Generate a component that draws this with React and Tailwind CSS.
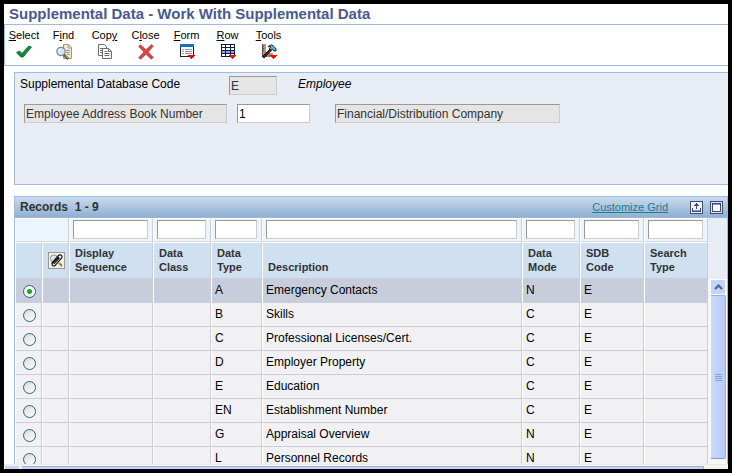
import React from "react";

const CheckIcon = () => (
  <svg width="16" height="16" viewBox="0 0 16 16" aria-hidden="true">
    <path d="M.6 8.500 3.600 7 6 9.500 12.800 2 15.500 3 7.200 13 4.800 13Z" fill="#118a3c" stroke="#0b6428" strokeWidth=".8" />
  </svg>
);

const FindIcon = () => (
  <svg width="16" height="16" viewBox="0 0 16 16" aria-hidden="true">
    <path d="M7.5 .5h5l3 3v11h-8z" fill="#f3ead2" stroke="#9c9484" />
    <path d="M12 .5v3.5h3.5M10 6.5h4M10 8.5h4M11 10.5h3" fill="none" stroke="#a49b88" />
    <circle cx="5" cy="7.5" r="4.2" fill="#cfe4f7" stroke="#7d8a99" strokeWidth="1.2" />
    <path d="M3 7.5a2.2 2.2 0 0 1 2.2-2.3" fill="none" stroke="#fff" strokeWidth="1.2" />
    <path d="m8 11 4.3 4" stroke="#59532e" strokeWidth="2.4" />
    <path d="m9 11.6 3.4 3.2" stroke="#d0b83c" strokeWidth="1" />
  </svg>
);

const CopyIcon = () => (
  <svg width="16" height="16" viewBox="0 0 16 16" aria-hidden="true" fill="#fff" stroke="#6d6d6d">
    <path d="M1.5 .5h6l2 2v9h-8z" />
    <path d="M3 4.5h3M3 6.5h3M3 8.5h3" />
    <path d="M5.5 4.5h6l3 3v7h-9z" />
    <path d="M11.5 4.5v3h3M7.5 7.5h3M7.5 9.5h5M7.5 11.5h5" fill="none" />
  </svg>
);

const CloseIcon = () => (
  <svg width="16" height="16" viewBox="0 0 16 16" aria-hidden="true">
    <path d="M2.500 .8 8 5.800 13.500 .6 15.400 2 10.200 8 15.400 13.500 13.200 15.300 8 10.200 2.800 15.300 .6 13.700 5.800 8 .6 2.500Z" fill="#dc4444" stroke="#b83434" strokeWidth=".6" />
  </svg>
);

const FormIcon = () => (
  <svg width="16" height="16" viewBox="0 0 16 16" aria-hidden="true" shapeRendering="crispEdges">
    <rect x="1.5" y=".5" width="13" height="12" fill="#fff" stroke="#222" />
    <rect x="1" y="0" width="14" height="3" fill="#1673b8" />
    <path d="M3 5.5h2M6 5.5h7M3 7.5h2M6 7.5h7M3 9.5h2M6 9.5h7" stroke="#8b98a8" />
    <path d="M9 11h7l-3.5 4z" fill="#f00" />
  </svg>
);

const RowIcon = () => (
  <svg width="16" height="16" viewBox="0 0 16 16" aria-hidden="true" shapeRendering="crispEdges">
    <rect x="1.5" y=".5" width="13" height="12" fill="#fff" />
    <rect x="1" y="6" width="14" height="3" fill="#8aa5ea" />
    <path d="M1.5 .5h13v12h-13zM5.5 0v13M10.5 0v13M1 3.5h14M1 6.5h14M1 9.5h14" fill="none" stroke="#111b3c" />
    <path d="M9 11h7l-3.5 4z" fill="#f00" />
  </svg>
);

const ToolsIcon = () => (
  <svg width="16" height="16" viewBox="0 0 16 16" aria-hidden="true">
    <path d="M1 0h4v9h7v4H1z" fill="#a99787" />
    <path d="M1.500 0v13M1 2.500h2M1 4.500h2M1 6.500h2M5.500 13v-2M8.500 13v-2" stroke="#665347" />
    <path d="m2 13.500 8-8" stroke="#111" strokeWidth="2.800" />
    <path d="m3 12.500 7-7" stroke="#a12c20" strokeWidth="1" />
    <path d="M7 2.500 10.500 .8 13 2.500 15 5v2h-2L11.500 5 9 6 8 5l2-2z" fill="#62b7e6" stroke="#111" strokeWidth=".9" />
    <path d="M9 11h7l-3.500 4z" fill="#f00" shapeRendering="crispEdges" />
  </svg>
);

const AttachIcon = () => (
  <svg width="15" height="15" viewBox="0 0 15 15" aria-hidden="true">
    <circle cx="5" cy="5.500" r="3.600" fill="#d7e7f3" stroke="#8b949c" />
    <path d="m10 10 3 3" stroke="#8c8448" strokeWidth="2" />
    <path d="M2.500 10.500 9 3q2-2 3.500-.6 1.200 1.400-.5 3.200L6.500 12q-1.800 1.700-3 .6-1-1.100.5-2.800L10 4M5 11l5.500-6" fill="none" stroke="#111" strokeWidth="1.100" />
  </svg>
);

const tools = [
  { before: "", key: "S", after: "elect", Icon: CheckIcon },
  { before: "F", key: "i", after: "nd", Icon: FindIcon },
  { before: "Cop", key: "y", after: "", Icon: CopyIcon },
  { before: "C", key: "l", after: "ose", Icon: CloseIcon },
  { before: "", key: "F", after: "orm", Icon: FormIcon },
  { before: "", key: "R", after: "ow", Icon: RowIcon },
  { before: "", key: "T", after: "ools", Icon: ToolsIcon },
];

const columns = [
  ["Display", "Sequence"],
  ["Data", "Class"],
  ["Data", "Type"],
  ["Description"],
  ["Data", "Mode"],
  ["SDB", "Code"],
  ["Search", "Type"],
];

const records = [
  ["A", "Emergency Contacts", "N"],
  ["B", "Skills", "C"],
  ["C", "Professional Licenses/Cert.", "C"],
  ["D", "Employer Property", "C"],
  ["E", "Education", "C"],
  ["EN", "Establishment Number", "C"],
  ["G", "Appraisal Overview", "N"],
  ["L", "Personnel Records", "N"],
];

const sunken = "h-[19px] border border-t-[#999] border-l-[#999] border-r-[#ccc] border-b-[#ccc] px-px outline-none";
const readOnly = "bg-[#e5e5e5] text-[#333]";
const cell = "border-l border-r border-l-white border-r-[#cccdd6]";

function Toolbar() {
  return (
    <div role="toolbar" aria-label="Actions" className="flex h-[42px] shrink-0 border-y border-l border-[#a3bcdc] pt-[3px]">
      {tools.map(({ before, key, after, Icon }) => (
        <button key={before + key + after} type="button" className="flex w-[41px] flex-col items-center text-[11px] leading-[14px] first:w-[38px]">
          <span>
            {before}
            <u className="underline-offset-1">{key}</u>
            {after}
          </span>
          <span className="mt-[2px]">
            <Icon />
          </span>
        </button>
      ))}
    </div>
  );
}

function HeaderForm() {
  return (
    <section className="mt-[6px] ml-[10px] h-[113px] shrink-0 border-y border-l border-[#9fbddb] bg-[#e8edf5] pt-[3px] text-[12px]">
      <div className="flex pl-[5px]">
        <label htmlFor="sdb-code" className="w-[209px] leading-[16px]">Supplemental Database Code</label>
        <input id="sdb-code" readOnly defaultValue="E" className={`w-[48px] ${sunken} ${readOnly}`} />
        <em className="ml-[21px] leading-[16px]">Employee</em>
      </div>
      <div className="mt-[9px] flex pl-[9px]">
        <input aria-label="Key name" readOnly defaultValue="Employee Address Book Number" className={`w-[203px] ${sunken} ${readOnly}`} />
        <input aria-label="Employee Address Book Number" defaultValue="1" className={`ml-[10px] w-[73px] bg-white ${sunken}`} />
        <input aria-label="Company" readOnly defaultValue="Financial/Distribution Company" className={`ml-[25px] w-[225px] ${sunken} ${readOnly}`} />
      </div>
    </section>
  );
}

function Grid() {
  return (
    <section className="mt-[11px] ml-[10px] flex min-h-0 flex-1 flex-col border-x border-t border-[#9fbddb]">
      <header className="flex h-[21px] shrink-0 items-center border-b border-[#9fb8d4] bg-linear-to-b from-[#c9dbec] to-[#8fb0d2] pr-1 pl-[5px]">
        <h2 className="flex-1 text-[12px] font-bold text-[#333]">Records&nbsp; 1 - 9</h2>
        <a href="#customize" className="mr-[22px] text-[11px] text-[#1f7a94] underline">Customize Grid</a>
        <button type="button" aria-label="Export" className="mr-[7px]">
          <svg className="block" width="13" height="13" viewBox="0 0 13 13" shapeRendering="crispEdges" aria-hidden="true">
            <rect x=".5" y=".5" width="12" height="12" rx="1" fill="#eef2fb" stroke="#45496f" />
            <path d="M6.500 2v6M4 4.500h5M5 3.500h3M2.500 7v3.500h8V7" fill="none" stroke="#45496f" />
            <path d="M3 9.500h7" stroke="#8a8df0" />
          </svg>
        </button>
        <button type="button" aria-label="Maximize">
          <svg className="block" width="13" height="13" viewBox="0 0 13 13" shapeRendering="crispEdges" aria-hidden="true">
            <rect x=".5" y=".5" width="12" height="12" rx="1" fill="#dde3f3" stroke="#45496f" />
            <rect x="2.500" y="2.500" width="8" height="8" fill="#f4f7fd" stroke="#45496f" />
            <path d="M3 3.500h7" stroke="#8a8df0" />
          </svg>
        </button>
      </header>
      <div className="flex min-h-0 flex-1 bg-[#e8ecf4]">
        <div className="min-w-0 flex-1 overflow-hidden">
          <table className="w-full table-fixed border-separate border-spacing-0 bg-[#f1f1f4]">
            <colgroup>
              <col className="w-[27px]" />
              <col className="w-[27px]" />
              <col className="w-[84px]" />
              <col className="w-[58px]" />
              <col className="w-[51px]" />
              <col />
              <col className="w-[58px]" />
              <col className="w-[64px]" />
              <col className="w-[64px]" />
            </colgroup>
            <thead>
              <tr className="h-[24px] bg-[#ecf4fe]">
                <td colSpan={2} className={`border-y border-t-white border-b-[#d5d8e0] ${cell}`} />
                {columns.map((c) => (
                  <td key={c.join(" ")} className={`border-y border-t-white border-b-[#d5d8e0] pt-px pr-1 pb-[2px] pl-[3px] ${cell}`}>
                    <input aria-label={`Filter ${c.join(" ")}`} className={`block w-full bg-white ${sunken}`} />
                  </td>
                ))}
              </tr>
              <tr className="h-[37px] bg-[#cfe0f0] text-left text-[11px] leading-[14px] text-[#333]">
                <th aria-label="Select" className={`border-y border-t-white border-b-[#cccdd6] ${cell}`} />
                <th className={`border-y border-t-white border-b-[#cccdd6] pl-[5px] ${cell}`}>
                  <button type="button" aria-label="Attachments" className="block size-[17px] border border-[#999] bg-[#f1efe6]">
                    <AttachIcon />
                  </button>
                </th>
                {columns.map((c) => (
                  <th key={c.join(" ")} className={`border-y border-t-white border-b-[#cccdd6] pb-1 pl-[5px] align-bottom ${cell}`}>
                    {c.map((line) => (
                      <span key={line} className="block">{line}</span>
                    ))}
                  </th>
                ))}
              </tr>
            </thead>
            <tbody>
              {records.map(([type, description, mode], i) => (
                <tr key={type} className="h-[24px] text-[12px] leading-[12px] has-checked:bg-[#c8cddc] [&>td]:border-b [&>td]:border-b-[#cccdd6] [&>td]:pb-px [&>td]:pl-[3px]">
                  <td className={cell}>
                    <input
                      type="radio"
                      name="record"
                      aria-label={description}
                      defaultChecked={i === 0}
                      className="mt-[3px] ml-[4px] block size-[13px] appearance-none rounded-full border border-[#2f5f8d] bg-linear-to-br from-[#dcdcd6] to-white checked:bg-[radial-gradient(circle,#21a121_0_2px,#f8f8f6_3px)]"
                    />
                  </td>
                  <td className={cell} />
                  <td className={cell} />
                  <td className={cell} />
                  <td className={cell}>{type}</td>
                  <td className={cell}>{description}</td>
                  <td className={cell}>{mode}</td>
                  <td className={cell}>E</td>
                  <td className={cell} />
                </tr>
              ))}
            </tbody>
          </table>
        </div>
        <div className="flex w-[19px] flex-col pt-[61px]">
          <div className="flex min-h-0 flex-1 flex-col bg-[#f7f7f4] pr-px pb-[5px] pl-[2px]">
            <button type="button" aria-label="Scroll up" className="flex h-[16px] shrink-0 items-center justify-center rounded-[2px] border border-white bg-[#c3d3fc]">
              <svg width="9" height="6" viewBox="0 0 9 6" aria-hidden="true">
                <path d="m1 5 3.500-3.500L8 5" fill="none" stroke="#4d6185" strokeWidth="2" />
              </svg>
            </button>
            <div className="flex flex-1 flex-col items-center justify-center gap-px rounded-[2px] border border-t-[#98b1e4] border-r-[#98b1e4] border-b-[#7b9ad8] border-l-white bg-linear-to-r from-[#c9d8fd] to-[#b7cbfa]">
              {[0, 1, 2, 3].map((n) => (
                <span key={n} className="h-px w-[7px] bg-[#7fa0ea]" />
              ))}
            </div>
          </div>
        </div>
      </div>
    </section>
  );
}

export default function App() {
  return (
    <main className="flex h-screen flex-col overflow-hidden border-4 border-black bg-white font-['Liberation_Sans',Arial,sans-serif] text-black">
      <h1 className="h-5 shrink-0 pl-[5px] text-[15px] leading-[20px] font-bold text-[#485a8f]">Supplemental Data - Work With Supplemental Data</h1>
      <Toolbar />
      <HeaderForm />
      <Grid />
      <div className="flex h-[5px] shrink-0 border-t border-[#ecebe4] bg-[#f3f2ec] pt-px">
        <div className="mr-[2px] w-[16px] border-x border-white bg-[#c3d3fc]" />
        <div className="mr-[24px] flex-1 border-t border-r border-[#98b1e4] bg-[#c3d3fc]" />
      </div>
    </main>
  );
}
